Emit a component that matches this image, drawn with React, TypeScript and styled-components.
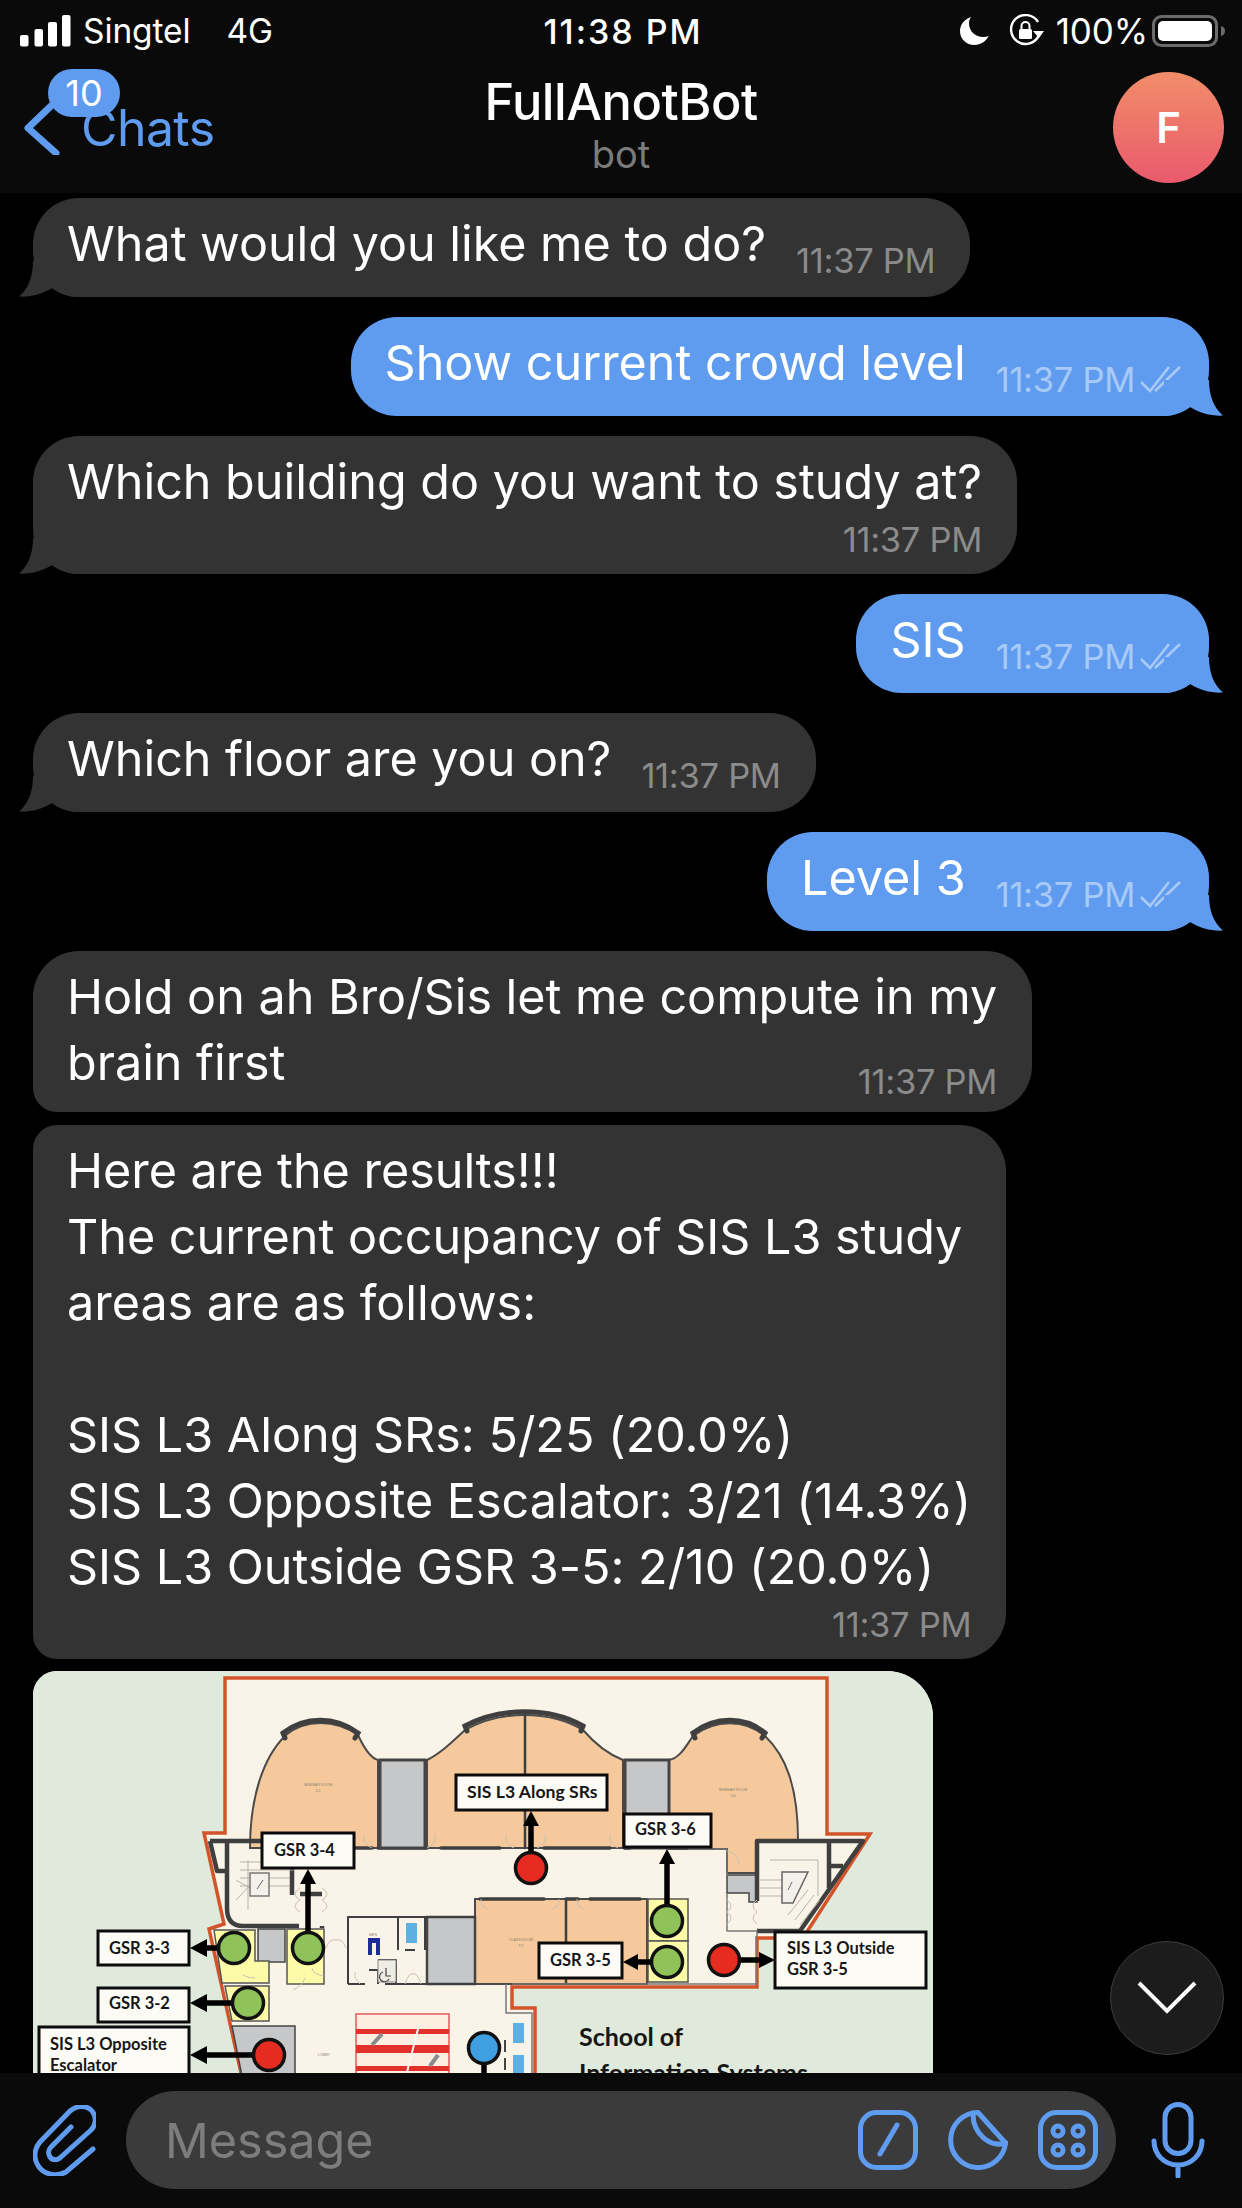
import React from 'react';
import styled, { createGlobalStyle } from 'styled-components';

const BLUE = '#5f9cf0';

const GlobalStyle = createGlobalStyle`
  html, body { margin: 0; padding: 0; background: #000; }
  * { box-sizing: border-box; }
`;

const Screen = styled.div`
  width: 1242px;
  height: 2208px;
  display: flex;
  flex-direction: column;
  overflow: hidden;
  background: #000;
  color: #fff;
  font-family: Inter, "Liberation Sans", sans-serif;
`;

const Header = styled.header`
  flex: none;
  height: 193px;
  background: #0a0a0a;
`;

const StatusBar = styled.div`
  height: 62px;
  padding: 0 16px 0 20px;
  display: grid;
  grid-template-columns: 1fr auto 1fr;
  align-items: center;
  font-size: 35px;
  letter-spacing: -0.1px;
`;

const StatusLeft = styled.div`
  display: flex;
  align-items: center;
  font-size: 33.5px;
`;

const Carrier = styled.span<{ $gap: number }>`
  margin-left: ${p => p.$gap}px;
`;

const Clock = styled.div`
  font-size: 34px;
  font-weight: 500;
  letter-spacing: 2px;
`;

const StatusRight = styled.div`
  display: flex;
  align-items: center;
  justify-content: flex-end;
  gap: 4px;
`;

const RotationLock = styled.svg`
  margin-left: 15px;
`;

const BatteryLevel = styled.span`
  margin-left: 7px;
`;

const NavBar = styled.div`
  position: relative;
  height: 131px;
  padding: 10px 18px 0;
  display: grid;
  grid-template-columns: 1fr auto 1fr;
  align-items: start;
`;

const BackLink = styled.div`
  display: flex;
  align-items: center;
  gap: 21px;
  height: 111px;
  padding-left: 6px;
  color: ${BLUE};
  font-size: 50px;
  letter-spacing: -0.6px;
`;

const UnreadBadge = styled.span`
  position: absolute;
  left: 48px;
  top: 7px;
  width: 72px;
  height: 48px;
  border-radius: 24px;
  background: ${BLUE};
  color: #fff;
  font-size: 36px;
  line-height: 48px;
  text-align: center;
`;

const TitleBlock = styled.div`
  text-align: center;
  padding-top: 1px;
`;

const ChatTitle = styled.div`
  font-size: 50.5px;
  font-weight: 500;
  line-height: 58px;
  letter-spacing: -0.5px;
`;

const ChatStatus = styled.div`
  font-size: 38px;
  line-height: 46px;
  color: #7b7b7b;
`;

const Avatar = styled.div`
  justify-self: end;
  width: 111px;
  height: 111px;
  border-radius: 50%;
  background: linear-gradient(#f18d69, #ea5a6d);
  display: flex;
  align-items: center;
  justify-content: center;
  font-size: 42px;
  font-weight: 600;
`;

const MessageList = styled.main`
  position: relative;
  flex: 1;
  min-height: 0;
  overflow: hidden;
  padding: 5px 33px 0 33px;
  display: flex;
  flex-direction: column;
`;

const Row = styled.div<{ $out?: boolean; $grouped?: boolean; $first?: boolean }>`
  flex: none;
  display: flex;
  justify-content: ${p => (p.$out ? 'flex-end' : 'flex-start')};
  margin-top: ${p => (p.$first ? 0 : p.$grouped ? 12.5 : 20)}px;
`;

const Bubble = styled.div<{ $out?: boolean; $inline?: boolean; $joinTop?: boolean; $joinBottom?: boolean; $tight?: boolean }>`
  position: relative;
  padding: 13px ${p => (p.$out ? 26 : 35)}px ${p => (p.$tight ? 16 : 20)}px 34px;
  border-radius: 46px;
  border-top-left-radius: ${p => (p.$joinTop ? 24 : 46)}px;
  border-bottom-left-radius: ${p => (p.$joinBottom ? 24 : 46)}px;
  background: ${p => (p.$out ? BLUE : '#333333')};
  color: ${p => (p.$out ? BLUE : '#333333')};
  display: flex;
  flex-direction: ${p => (p.$inline ? 'row' : 'column')};
  align-items: ${p => (p.$inline ? 'flex-end' : 'stretch')};
  gap: ${p => (p.$inline ? 30 : 0)}px;
`;

const Tail = styled.svg<{ $out?: boolean }>`
  position: absolute;
  bottom: 0;
  width: 60px;
  height: 36px;
  ${p => (p.$out ? 'right: -15px; transform: scaleX(-1);' : 'left: -15px;')}
`;

const MessageText = styled.div`
  font-size: 48.5px;
  line-height: 66px;
  letter-spacing: -0.02px;
  color: #fff;
  white-space: pre-line;
`;

const Meta = styled.div<{ $out?: boolean; $stacked?: boolean; $overlay?: boolean }>`
  display: flex;
  align-items: center;
  justify-content: flex-end;
  gap: 4px;
  height: 39px;
  padding-top: ${p => (p.$stacked ? 10 : 5)}px;
  font-size: 34.5px;
  letter-spacing: -0.3px;
  color: ${p => (p.$out ? '#a9c9f6' : '#8b8b8b')};
  ${p => p.$overlay && 'position: absolute; right: 35px; bottom: 16px;'}
`;

const PhotoBubble = styled.div`
  flex: none;
  width: 900px;
  height: 420px;
  border-radius: 24px 46px 0 0;
  overflow: hidden;
  background: #dfe9dc;
`;

const MapDrawing = styled.svg`
  display: block;
  width: 900px;
  height: 420px;
`;

const ScrollButton = styled.div`
  position: absolute;
  left: 1110px;
  bottom: 18px;
  width: 114px;
  height: 114px;
  border-radius: 50%;
  background: #1c1c1c;
  border: 1px solid #3c3c3c;
  display: flex;
  align-items: center;
  justify-content: center;
`;

const InputBar = styled.footer`
  flex: none;
  height: 135px;
  background: #0a0a0a;
  padding: 18px 37px 19px 33px;
  display: flex;
  align-items: center;
`;

const AttachIcon = styled.svg`
  flex: none;
  width: 63px;
  height: 71px;
  margin-right: 30px;
  fill: none;
  stroke: ${BLUE};
  stroke-width: 5;
  stroke-linecap: round;
`;

const InputPill = styled.div`
  flex: none;
  width: 990px;
  height: 98px;
  border-radius: 49px;
  background: #3b3b3b;
  padding: 0 18px 0 39px;
  display: flex;
  align-items: center;
  gap: 30px;
`;

const Placeholder = styled.div`
  flex: 1;
  font-size: 48.5px;
  color: #7d7d7d;
`;

const InputIcon = styled.svg`
  flex: none;
  width: 60px;
  height: 60px;
  fill: none;
  stroke: ${BLUE};
  stroke-width: 5;
  stroke-linecap: round;
  stroke-linejoin: round;
`;

const MicIcon = styled.svg`
  flex: none;
  width: 54px;
  height: 76px;
  margin-left: 35px;
  fill: none;
  stroke: ${BLUE};
  stroke-width: 5;
  stroke-linecap: round;
`;

const Label = styled.text<{ $size?: number }>`
  font-family: Lato, "Open Sans", sans-serif;
  font-weight: 700;
  font-size: ${p => p.$size ?? 16.5}px;
  fill: #161616;
`;

const TinyLabel = styled.text`
  font-family: "Liberation Sans", sans-serif;
  font-size: 3.6px;
  fill: #8a8172;
  text-anchor: middle;
`;

const CheckIcon = () => (
  <svg width="44" height="28" viewBox="0 0 44 28" fill="none" stroke="#a9c9f6" strokeWidth="2.6">
    <path d="M2 17l9 9L30 2M16 26L41 2" />
  </svg>
);

const TailShape = ({ out }: { out?: boolean }) => (
  <Tail $out={out} viewBox="0 0 60 36">
    <path fill="currentColor" d="M15 0C15 16 10 28 1 35.6C12 36.4 24 33 34 27C42 33 52 36 60 36V0Z" />
  </Tail>
);

type Msg = {
  text: string;
  out?: boolean;
  inline?: boolean;
  tail?: boolean;
  grouped?: boolean;
  joinTop?: boolean;
  joinBottom?: boolean;
  tight?: boolean;
  overlayTime?: boolean;
};

const messages: Msg[] = [
  { text: 'What would you like me to do?', inline: true, tail: true },
  { text: 'Show current crowd level', out: true, inline: true, tail: true },
  { text: 'Which building do you want to study at?', tail: true },
  { text: 'SIS', out: true, inline: true, tail: true },
  { text: 'Which floor are you on?', inline: true, tail: true },
  { text: 'Level 3', out: true, inline: true, tail: true },
  { text: 'Hold on ah Bro/Sis let me compute in my\nbrain first', joinBottom: true, tight: true, overlayTime: true },
  {
    text:
      'Here are the results!!!\nThe current occupancy of SIS L3 study\nareas are as follows:\n\nSIS L3 Along SRs: 5/25 (20.0%)\nSIS L3 Opposite Escalator: 3/21 (14.3%)\nSIS L3 Outside GSR 3-5: 2/10 (20.0%)',
    grouped: true,
    joinTop: true,
    joinBottom: true,
  },
];

const labelBoxes = [
  [262, 1833, 92, 35],
  [98, 1931, 91, 34],
  [98, 1988, 91, 34],
  [39, 2027, 150, 70],
  [456, 1775, 151, 35],
  [539, 1943, 83, 35],
  [624, 1814, 87, 33],
  [775, 1932, 151, 56],
];

const labels: [string, number, number, number?][] = [
  ['GSR 3-4', 274, 1856],
  ['GSR 3-3', 109, 1954],
  ['GSR 3-2', 109, 2009],
  ['SIS L3 Opposite', 50, 2050],
  ['Escalator', 50, 2071],
  ['SIS L3 Along SRs', 467, 1798, 17.6],
  ['GSR 3-5', 550, 1966],
  ['GSR 3-6', 635, 1835],
  ['SIS L3 Outside', 787, 1954],
  ['GSR 3-5', 787, 1975],
];

const dots: [number, number, string][] = [
  [234, 1948, '#8fc35a'],
  [308, 1948, '#8fc35a'],
  [248, 2003, '#8fc35a'],
  [269, 2055, '#e62c20'],
  [531, 1868, '#e62c20'],
  [484, 2048, '#3f9fe0'],
  [667, 1921, '#8fc35a'],
  [667, 1962, '#8fc35a'],
  [724, 1960, '#e62c20'],
];

const doors = [
  'M293 1990q8 -3 12 -12',
  'M255 1978q-8 0 -12 -3',
  'M324 1976q-12 -2 -12 -8',
  'M300 1912q-10 -6 0 -12q-10 -6 0 -12',
  'M322 1912q10 -6 0 -12q10 -6 0 -12',
  'M427 1848q10 -4 8 -14',
  'M372 1848q-10 -4 -8 -14',
  'M514 1848q-10 -4 -8 -14',
  'M537 1848q10 -4 8 -14',
  'M618 1848q-10 -4 -8 -14',
  'M481 1899q0 10 8 10',
  'M559 1899q0 10 -8 10',
  'M577 1899q0 10 8 10',
  'M326 1948q4 -10 10 -8q6 -2 10 8',
  'M405 1984q4 -12 8 -10q4 -2 8 10',
  'M360 1984q-8 -8 -4 -12',
  'M727 1900q8 6 0 12q8 6 0 12',
  'M757 1900q-8 6 0 12q-8 6 0 12',
  'M727 1851q12 2 12 14',
];

const FloorPlan = () => (
  <MapDrawing viewBox="33 1671 900 420">
    <rect x="33" y="1671" width="900" height="420" fill="#dfe9dc" />
    {/* building outline */}
    <path
      d="M225 1678H827V1834H870L803 1938H757V1987H512V2008H535V2091H245L209 1929L224 1924L204 1833H225Z"
      fill="#faf4e8"
      stroke="#d4542a"
      strokeWidth="3.5"
    />
    {/* seminar rooms */}
    <g fill="#f5c99b" stroke="#4a4a4a" strokeWidth="2">
      <path d="M250 1848C250 1800 262 1758 286 1735C305 1719 335 1719 358 1735C364 1748 370 1758 378 1760V1848Z" />
      <path d="M427 1760C440 1754 452 1742 465 1730C500 1710 550 1710 583 1730C596 1745 610 1755 623 1760V1848H427Z" />
      <path d="M669 1760C680 1758 686 1746 693 1736C715 1719 745 1719 765 1736C785 1755 798 1785 798 1841H757V1873H727V1849H669Z" />
      <path d="M475 1899H647V1984H475Z" />
    </g>
    <g fill="none" stroke="#3f3f3f" strokeLinecap="round">
      <path strokeWidth="5" d="M285 1738L283 1733C305 1716 335 1716 358 1733L355 1738" />
      <path strokeWidth="5" d="M467 1731L465 1726C500 1707 550 1707 583 1726L581 1731" />
      <path strokeWidth="5" d="M695 1738L693 1733C715 1716 745 1716 765 1733L762 1738" />
      <path strokeWidth="2.5" d="M525 1714V1848M566 1899V1984" />
      <path strokeWidth="3.5" d="M354 1848H372M378 1848H427M441 1848H500M544 1848H610M625 1848H630M480 1899H544M566 1899H578M590 1899H640" />
    </g>
    {/* service cores */}
    <g fill="#c6c7c9" stroke="#444" strokeWidth="3">
      <rect x="380" y="1760" width="45" height="88" />
      <rect x="625" y="1760" width="44" height="88" />
      <rect x="427" y="1917" width="48" height="67" strokeWidth="2.5" />
      <rect x="258" y="1929" width="27" height="33" strokeWidth="1.5" />
      <path d="M232 2026H295V2091H245Z" strokeWidth="1.5" />
      <path d="M727 1875H757V1902H749V1893H727Z" strokeWidth="1.5" />
    </g>
    {/* study rooms */}
    <g fill="#fdfba8" stroke="#555" strokeWidth="1.5">
      <path d="M214 1930H255V1961H269V1983H222Z" />
      <rect x="287" y="1929" width="37" height="55" />
      <path d="M225 1986H269V2021H232Z" />
      <rect x="648" y="1899" width="40" height="42" />
      <rect x="648" y="1941" width="40" height="41" />
    </g>
    {/* stairs and walls */}
    <g fill="none" stroke="#3f3f3f" strokeLinejoin="round">
      <path strokeWidth="4.5" d="M210 1841H262M227 1841V1908Q227 1926 243 1926H299M210 1841L217 1871H227M292 1868V1895M300 1894H322M322 1926V1928" />
      <path strokeWidth="4.5" d="M757 1901V1841H863L800 1931H757M829 1841V1888M829 1866H843" />
      <path strokeWidth="2" d="M348 1984V1917H475M348 1984H365M385 1984H475M398 1917V1950M405 1950H415M425 1917V1950M369 1970H378V1984M378 1960H396V1984" />
      <path strokeWidth="1.5" stroke="#777" d="M688 1849H727V1876M727 1893V1931H757V1984H512M506 1984V2013H532V2091" />
    </g>
    <g fill="none" stroke="#b9b3a6" strokeWidth="1">
      <path d="M240 1862H295M240 1870H295M240 1878H290M240 1886H290M236 1900L260 1875M236 1880L262 1895M248 1860V1910" />
      <path d="M770 1860H818V1896M760 1880H782M760 1888H782M760 1896H782M808 1890L788 1915M814 1895L795 1920M820 1900L800 1925" />
      <rect x="250" y="1873" width="19" height="23" fill="#f4f1ea" stroke="#777" strokeWidth="1.5" />
      <path d="M782 1872H808L793 1903H782Z" fill="#f4f1ea" stroke="#666" strokeWidth="1.5" />
      <path d="M257 1889L263 1880M788 1890L792 1882" stroke="#667" strokeWidth="1" />
    </g>
    <g fill="none" stroke="#c9c2b4" strokeWidth="1">
      {doors.map(d => (
        <path key={d} d={d} />
      ))}
    </g>
    {/* restroom and lift signs */}
    <g fill="#1c2d9a">
      <rect x="368" y="1938" width="4" height="17" />
      <rect x="376" y="1938" width="4" height="17" />
      <rect x="368" y="1938" width="12" height="5" />
    </g>
    <g fill="#5fb0e2">
      <rect x="406" y="1923" width="11" height="20" />
      <rect x="513" y="2023" width="11" height="20" />
      <rect x="513" y="2055" width="11" height="20" />
    </g>
    <rect x="378" y="1960" width="18" height="22" fill="#efece4" stroke="#888" />
    <path d="M386 1968v8h5M383 1972a5 5 0 1 0 6 7" fill="none" stroke="#444" strokeWidth="1.2" />
    {/* escalators */}
    <rect x="356" y="2014" width="93" height="70" fill="#fdeee2" stroke="#e05a58" strokeWidth="1.5" />
    <g fill="#e3302a">
      <rect x="356" y="2029" width="93" height="5" />
      <rect x="356" y="2045" width="93" height="8" />
      <rect x="356" y="2066" width="93" height="5" />
    </g>
    <path d="M418 2029L405 2080" stroke="#fdf7ee" strokeWidth="2" />
    <path d="M372 2045L382 2034M430 2066L438 2055" stroke="#8a8a8a" strokeWidth="4" />
    <path d="M505 2040V2052M505 2058V2070" stroke="#444" strokeWidth="2" />
    {/* tiny room names */}
    <TinyLabel x="318" y="1786">SEMINAR ROOM</TinyLabel>
    <TinyLabel x="318" y="1792">3-1</TinyLabel>
    <TinyLabel x="733" y="1791">SEMINAR ROOM</TinyLabel>
    <TinyLabel x="733" y="1797">3-4</TinyLabel>
    <TinyLabel x="521" y="1941">CLASS ROOM</TinyLabel>
    <TinyLabel x="521" y="1947">3-7</TinyLabel>
    <TinyLabel x="373" y="1936">MEN</TinyLabel>
    <TinyLabel x="324" y="2056">LOBBY</TinyLabel>
    {/* arrows */}
    <g stroke="#000" strokeWidth="5.5" fill="none">
      <path d="M218 1948H200M308 1932V1880M232 2003H200M253 2055H200M531 1852V1820M650 1962H635M667 1905V1860M740 1960H765M484 2064V2091" />
    </g>
    <path
      d="M190 1948L207 1939V1957ZM308 1869L300 1884H316ZM190 2003L207 1994V2012ZM190 2055L207 2046V2064ZM531 1811L523 1826H539ZM623 1962L638 1954V1970ZM667 1849L659 1864H675ZM775 1960L759 1952V1968Z"
      fill="#000"
    />
    {dots.map(([cx, cy, color]) => (
      <circle key={`${cx}-${cy}`} cx={cx} cy={cy} r="15.5" fill={color} stroke="#111" strokeWidth="3.5" />
    ))}
    {labelBoxes.map(([x, y, w, h]) => (
      <rect key={`${x}-${y}`} x={x} y={y} width={w} height={h} fill="#fcfbf6" stroke="#0c0c0c" strokeWidth="3" />
    ))}
    {labels.map(([text, x, y, size]) => (
      <Label key={`${x}-${y}`} x={x} y={y} $size={size}>
        {text}
      </Label>
    ))}
    <Label x="579" y="2046" $size={25}>School of</Label>
    <Label x="579" y="2082" $size={25}>Information Systems</Label>
  </MapDrawing>
);

const MessageRow = ({ msg, first }: { msg: Msg; first?: boolean }) => (
  <Row $out={msg.out} $grouped={msg.grouped} $first={first}>
    <Bubble $out={msg.out} $inline={msg.inline} $joinTop={msg.joinTop} $joinBottom={msg.joinBottom} $tight={msg.tight}>
      {msg.tail && <TailShape out={msg.out} />}
      <MessageText>{msg.text}</MessageText>
      <Meta $out={msg.out} $stacked={!msg.inline} $overlay={msg.overlayTime}>
        11:37 PM
        {msg.out && <CheckIcon />}
      </Meta>
    </Bubble>
  </Row>
);

function App() {
  return (
    <Screen>
      <GlobalStyle />
      <Header>
        <StatusBar>
          <StatusLeft>
            <svg width="51" height="32" viewBox="0 0 51 32" fill="#fff">
              <rect x="0" y="20" width="8.5" height="11.5" rx="2" />
              <rect x="14.5" y="14" width="8.5" height="17.5" rx="2" />
              <rect x="28" y="7" width="9" height="24.5" rx="2" />
              <rect x="42" y="0" width="8.5" height="31.5" rx="2" />
            </svg>
            <Carrier $gap={12}>Singtel</Carrier>
            <Carrier $gap={36}>4G</Carrier>
          </StatusLeft>
          <Clock>11:38 PM</Clock>
          <StatusRight>
            <svg width="30" height="28" viewBox="0 0 30 28" fill="#fff">
              <path d="M11 0C4.5 2 0 7.6 0 14.2C0 22 6.4 28 14.4 28C20.6 28 26 24.4 28.6 19C27 19.6 25.2 20 23.2 20C15.4 20 9 14 9 6.4C9 4.2 9.7 2 11 0Z" />
            </svg>
            <RotationLock width="36" height="34" viewBox="0 0 36 34" fill="none" stroke="#fff" strokeWidth="2.4">
              <path d="M30 21A14.5 14.5 0 1 1 29 8" />
              <path d="M24 17H35L30 24Z" fill="#fff" stroke="none" />
              <rect x="10" y="15" width="13" height="10" rx="1.5" fill="#fff" stroke="none" />
              <path d="M12.5 15V12a4 4 0 0 1 8 0v3" strokeWidth="2" />
            </RotationLock>
            <BatteryLevel>100%</BatteryLevel>
            <svg width="74" height="32" viewBox="0 0 74 32" fill="none">
              <rect x="1.5" y="1.5" width="63" height="29" rx="8" stroke="#6b6b6b" strokeWidth="3" />
              <rect x="6" y="6" width="54" height="20" rx="5" fill="#fff" />
              <path d="M69 11q4 1 4 5t-4 5Z" fill="#6b6b6b" />
            </svg>
          </StatusRight>
        </StatusBar>
        <NavBar>
          <BackLink>
            <svg width="36" height="54" viewBox="0 0 36 54" fill="none" stroke={BLUE} strokeWidth="7" strokeLinecap="round" strokeLinejoin="round">
              <path d="M28 4L4 27L32 52" />
            </svg>
            Chats
          </BackLink>
          <UnreadBadge>10</UnreadBadge>
          <TitleBlock>
            <ChatTitle>FullAnotBot</ChatTitle>
            <ChatStatus>bot</ChatStatus>
          </TitleBlock>
          <Avatar>F</Avatar>
        </NavBar>
      </Header>
      <MessageList>
        {messages.map((m, i) => (
          <MessageRow key={m.text} msg={m} first={i === 0} />
        ))}
        <Row $grouped>
          <PhotoBubble>
            <FloorPlan />
          </PhotoBubble>
        </Row>
        <ScrollButton>
          <svg width="60" height="34" viewBox="0 0 60 34" fill="none" stroke="#fff" strokeWidth="4">
            <path d="M2 2L30 30L58 2" />
          </svg>
        </ScrollButton>
      </MessageList>
      <InputBar>
        <AttachIcon viewBox="0 0 63 71">
          <path d="M60 44L33 67C24 72 12 70 6 62C0 54 1 44 7 37L37 6C44 0 54 0 59 6C64 12 63 20 58 25L28 52C24 56 19 55 17 52C15 49 15 45 18 42L38 22" />
        </AttachIcon>
        <InputPill>
          <Placeholder>Message</Placeholder>
          <InputIcon viewBox="0 0 60 60">
            <rect x="2.5" y="2.5" width="55" height="55" rx="16" />
            <path d="M39 15L22 44" />
          </InputIcon>
          <InputIcon viewBox="0 0 60 60">
            <path d="M30 2.5A27.5 27.5 0 1 0 57.5 33L30 2.5Z" />
            <path d="M25 4C25 24 42 38 58 33" />
          </InputIcon>
          <InputIcon viewBox="0 0 60 60">
            <rect x="2.5" y="2.5" width="55" height="55" rx="16" />
            <circle cx="20" cy="21" r="5" />
            <circle cx="40" cy="21" r="5" />
            <circle cx="20" cy="40" r="5" />
            <circle cx="40" cy="40" r="5" />
          </InputIcon>
        </InputPill>
        <MicIcon viewBox="0 0 54 76">
          <rect x="14" y="2.5" width="26" height="49" rx="13" />
          <path d="M3 39C3 52 13 63 27 63C41 63 51 52 51 39M27 63V74" />
        </MicIcon>
      </InputBar>
    </Screen>
  );
}

export default App;
